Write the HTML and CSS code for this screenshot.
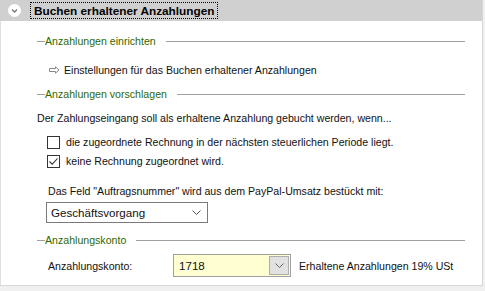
FILE: index.html
```html
<!DOCTYPE html>
<html>
    <head>
        <title>Buchen erhaltener Anzahlungen</title>
        <link rel="stylesheet" href="styles.css">
    </head>
    <body>
        <div class="panel">
            <div class="panel-head">
                <span class="toggle">
                    <svg width="13" height="13" viewBox="0 0 13 13"><circle cx="6.5" cy="6.5" r="6.5" fill="#fff"/><path d="M4 5.5 L6.5 8 L9 5.5" fill="none" stroke="#777" stroke-width="1.3"/></svg>
                </span>
                <span class="title">Buchen erhaltener Anzahlungen</span>
            </div>
            <div class="panel-body">
                <div class="group group-first"><span class="group-title">Anzahlungen einrichten</span></div>
                <div class="link-row">
                    <svg class="arrow" width="11" height="8" viewBox="0 0 11 8"><path d="M0.5 2.5 H6.5 V0.8 L10 4 L6.5 7.2 V5.5 H0.5 Z" fill="#fff" stroke="#888" stroke-width="1"/></svg>
                    Einstellungen für das Buchen erhaltener Anzahlungen
                </div>
                <div class="group"><span class="group-title">Anzahlungen vorschlagen</span></div>
                <div class="intro">Der Zahlungseingang soll als erhaltene Anzahlung gebucht werden, wenn...</div>
                <label class="check">
                    <span class="box"></span>
                    die zugeordnete Rechnung in der nächsten steuerlichen Periode liegt.
                </label>
                <label class="check">
                    <span class="box"><svg width="11" height="11" viewBox="0 0 11 11"><path d="M1.5 5.5 L4.2 8.2 L9.5 2.5" fill="none" stroke="#333" stroke-width="1.1"/></svg></span>
                    keine Rechnung zugeordnet wird.
                </label>
                <div class="field-label">Das Feld "Auftragsnummer" wird aus dem PayPal-Umsatz bestückt mit:</div>
                <div class="combo">
                    Geschäftsvorgang
                    <svg width="9" height="5" viewBox="0 0 9 5"><path d="M0.5 0.5 L4.5 4.5 L8.5 0.5" fill="none" stroke="#555" stroke-width="1"/></svg>
                </div>
                <div class="group"><span class="group-title">Anzahlungskonto</span></div>
                <div class="account-row">
                    <span class="account-label">Anzahlungskonto:</span>
                    <div class="account-input">
                        1718
                        <span class="drop"><svg width="9" height="5" viewBox="0 0 9 5"><path d="M0.5 0.5 L4.5 4.5 L8.5 0.5" fill="none" stroke="#666" stroke-width="1"/></svg></span>
                    </div>
                    <span class="account-name">Erhaltene Anzahlungen 19% USt</span>
                </div>
            </div>
        </div>
    </body>
</html>
```
FILE: styles.css
```css
body {
    margin: 0;
    background: #f0f0f0;
    font-family: "Liberation Sans", Arial, sans-serif;
    font-size: 10.6px;
    line-height: 14px;
    color: #111;
}
.panel {
    width: 482px;
    border-right: 1px solid #d8d8d8;
    border-bottom: 1px solid #d8d8d8;
    background: #fff;
}
.panel-head {
    height: 21px;
    background: #d0d0d0;
    display: flex;
    align-items: center;
}
.toggle {
    display: flex;
    margin-left: 8px;
}
.title {
    margin-left: 9px;
    padding: 1px 3px 0 3px;
    border: 1px dotted #000;
    font-weight: bold;
    font-size: 11.8px;
    color: #000;
}
.panel-body {
    height: 264px;
    padding: 13px 17px 0 36px;
    box-sizing: border-box;
    border-left: 1px solid #e0e0e0;
}
.group {
    display: flex;
    align-items: center;
    height: 14px;
    margin-top: 10px;
    color: #306800;
}
.group-first {
    margin-top: 0;
}
.group::before {
    content: "";
    width: 8px;
    border-top: 1px solid #a0a0a0;
}
.group::after {
    content: "";
    flex: 1;
    margin-left: 10px;
    border-top: 1px solid #a0a0a0;
}
.link-row {
    display: flex;
    align-items: center;
    margin: 15px 0 0 12px;
}
.arrow {
    margin-right: 4px;
}
.intro {
    margin-top: 10px;
}
.check {
    display: flex;
    align-items: center;
    margin-left: 10px;
    margin-top: 5px;
}
.intro + .check {
    margin-top: 10px;
}
.box {
    width: 11px;
    height: 11px;
    border: 1px solid #333;
    margin-right: 6px;
    display: flex;
}
.field-label {
    margin: 16px 0 0 11px;
}
.combo {
    margin: 4px 0 0 9px;
    border: 1px solid #7a7a7a;
    display: flex;
    align-items: center;
    justify-content: space-between;
    padding: 0 6px 0 4px;
    box-sizing: border-box;
    width: 162px;
    height: 21px;
    font-size: 11.6px;
}
.account-row {
    display: flex;
    align-items: center;
    margin: 7px 0 0 11px;
}
.account-label {
    width: 125px;
}
.account-input {
    width: 118px;
    height: 23px;
    box-sizing: border-box;
    border: 1px solid #a0a0a0;
    background: #ffffd2;
    display: flex;
    align-items: center;
    justify-content: space-between;
    padding: 0 1px 0 5px;
    font-size: 11.6px;
}
.drop {
    width: 20px;
    height: 19px;
    box-sizing: border-box;
    border: 1px solid #adadad;
    background: #e1e1e1;
    display: flex;
    align-items: center;
    justify-content: center;
}
.account-name {
    margin-left: 8px;
}
```
